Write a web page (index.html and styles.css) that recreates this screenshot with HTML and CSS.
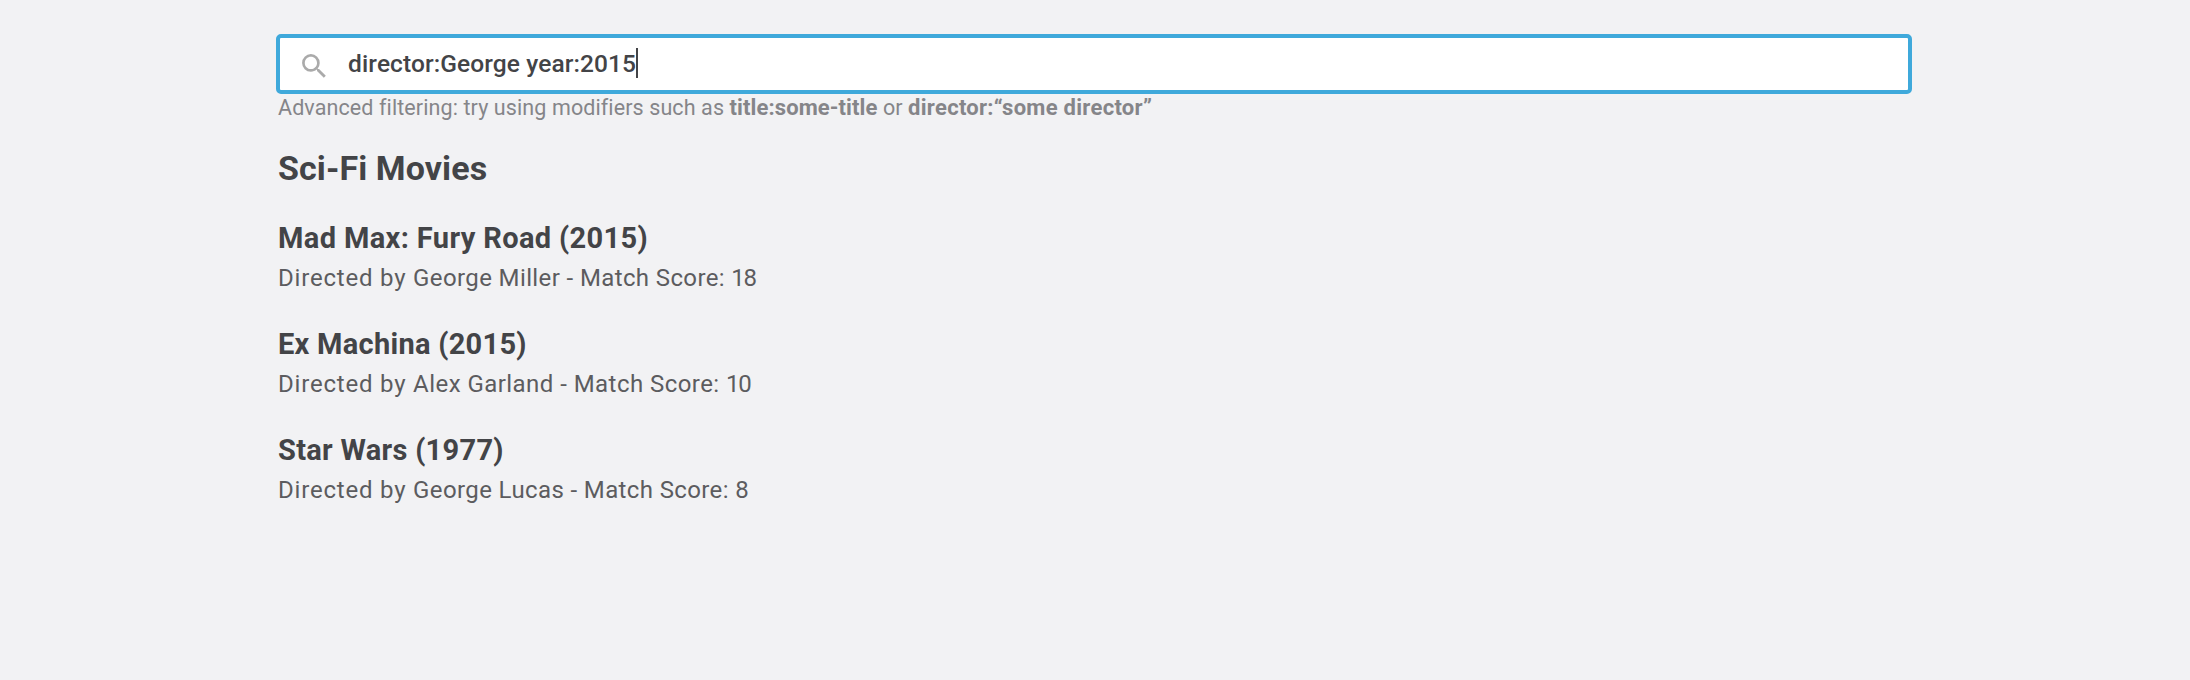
FILE: index.html
```html
<!DOCTYPE html>
<html lang="en">
<head>
<meta charset="utf-8">
<title>Sci-Fi Movies</title>
<link rel="stylesheet" href="styles.css">
</head>
<body>
<main class="page">
  <div class="search">
    <svg class="search-icon" viewBox="0 0 24 24" aria-hidden="true"><path d="M15.5 14h-.79l-.28-.27A6.471 6.471 0 0 0 16 9.5 6.5 6.5 0 1 0 9.5 16c1.61 0 3.09-.59 4.23-1.57l.27.28v.79l5 4.99L20.49 19l-4.99-5zm-6 0C7.01 14 5 11.99 5 9.5S7.01 5 9.5 5 14 7.01 14 9.5 11.99 14 9.5 14z"/></svg>
    <span class="search-text">director:George year:2015</span>
    <span class="caret"></span>
  </div>
  <p class="hint">Advanced filtering: try using modifiers such as <b class="mod mod-title">title:some-title</b> or <b class="mod">director:“some director”</b></p>
  <h1 class="heading">Sci-Fi Movies</h1>
  <ul class="movies">
    <li class="movie mad-max">
      <h2 class="title">Mad Max: Fury Road (2015)</h2>
      <p class="details"><span class="by">Directed by </span>George Miller - Match Score: <span class="score">18</span></p>
    </li>
    <li class="movie ex-machina">
      <h2 class="title">Ex Machina (2015)</h2>
      <p class="details"><span class="by">Directed by </span>Alex Garland - Match Score: <span class="score">10</span></p>
    </li>
    <li class="movie star-wars">
      <h2 class="title">Star Wars (1977)</h2>
      <p class="details"><span class="by">Directed by </span>George Lucas - Match Score: <span class="score">8</span></p>
    </li>
  </ul>
</main>
</body>
</html>
```
FILE: styles.css
```css
* { box-sizing: border-box; }
body {
  margin: 0;
  background: #f2f2f4;
  color: #434447;
  font-family: Roboto, "Liberation Sans", sans-serif;
}
.page { width: 1636px; margin: 0 0 0 276px; padding-top: 34px; }
.search {
  display: flex;
  align-items: center;
  height: 60px;
  padding-left: 18px;
  background: #fff;
  border: 4px solid #3fa9db;
  border-radius: 5px;
}
.search-icon { width: 32.6px; height: 32.6px; margin-top: 4px; fill: #aaa; }
.search-text {
  margin-left: 17.5px;
  font-size: 24.5px;
  font-weight: 500;
  line-height: 32px;
  letter-spacing: .1px;
  white-space: nowrap;
}
.caret { width: 2px; height: 30px; margin-top: -2px; background: #434447; }
.hint {
  margin: 0 0 0 2px;
  font-size: 21.5px;
  line-height: 28px;
  letter-spacing: .1px;
  color: #858589;
}
.mod { font-size: 22px; line-height: 1; letter-spacing: .28px; }
.mod-title { letter-spacing: .1px; }
.heading {
  margin: 26px 0 32px 2px;
  font-size: 34px;
  line-height: 40px;
  letter-spacing: .1px;
}
.movies {
  display: flex;
  flex-direction: column;
  gap: 32px;
  margin: 0 0 0 2px;
  padding: 0;
  list-style: none;
}
.title { margin: 0 0 6px; font-size: 29px; line-height: 36px; letter-spacing: .37px; }
.details { margin: 0; font-size: 24px; line-height: 32px; letter-spacing: .38px; color: #5c5c5f; }
.by { letter-spacing: .8px; }
.score { letter-spacing: -1.4px; }
.ex-machina .title { letter-spacing: .28px; }
.ex-machina .details { letter-spacing: .45px; }
.star-wars .title { letter-spacing: .3px; }
```
